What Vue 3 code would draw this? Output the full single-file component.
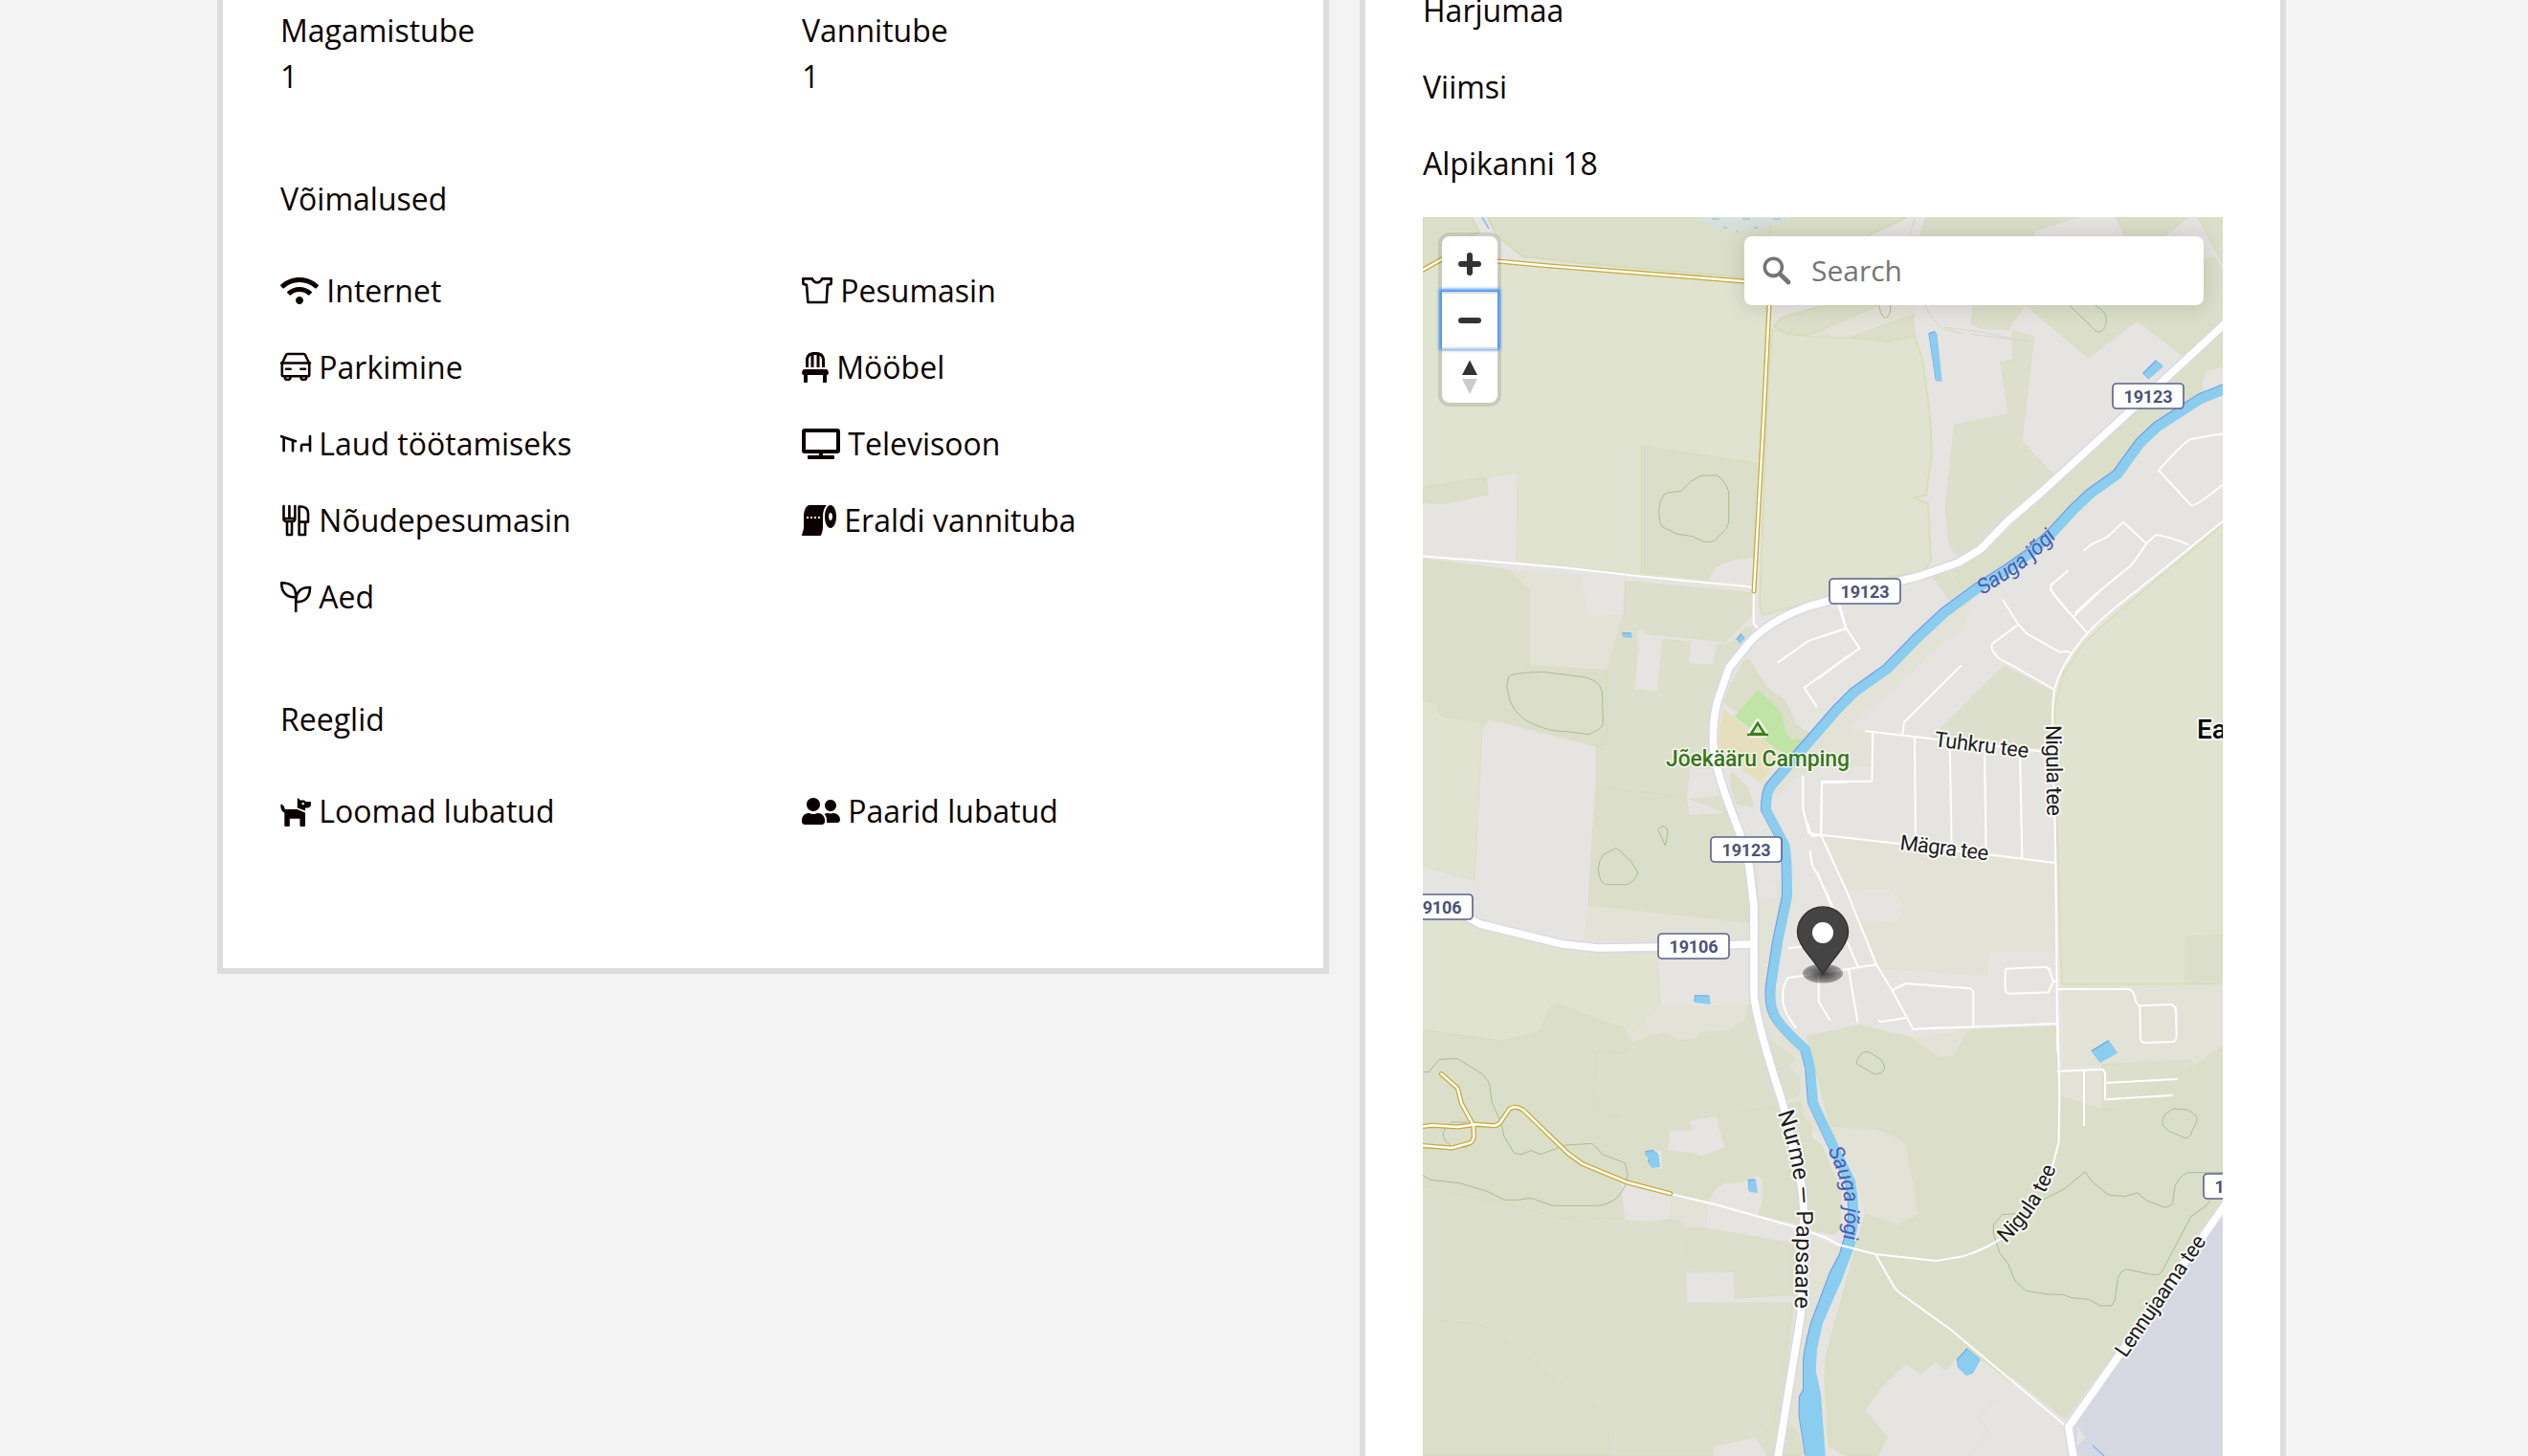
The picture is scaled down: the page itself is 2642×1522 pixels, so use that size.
<script setup>
const icons = {
  wifi: { w: 40, box: '0 0 640 512', fill: ['M634.91 154.88C457.74-8.99 182.19-8.93 5.09 154.88c-6.66 6.16-6.79 16.59-.35 22.98l34.24 33.97c6.14 6.1 16.02 6.23 22.4.38 145.92-133.68 371.3-133.71 517.25 0 6.38 5.85 16.26 5.71 22.4-.38l34.24-33.97c6.43-6.39 6.3-16.82-.36-22.98zM320 352c-35.35 0-64 28.65-64 64s28.65 64 64 64 64-28.65 64-64-28.65-64-64-64zm202.67-83.59c-115.26-101.93-290.21-101.82-405.34 0-6.9 6.1-7.12 16.69-.57 23.15l34.44 33.99c6 5.92 15.66 6.32 22.05.8 83.95-72.57 209.74-72.41 293.49 0 6.39 5.52 16.05 5.13 22.05-.8l34.44-33.99c6.56-6.46 6.33-17.06-.56-23.15z'] },
  car: { w: 32, box: '0 0 32 32', line: ['M2 11.5L6 3Q6.5 2 7.5 2H24.5Q25.5 2 26 3L30 11.5M1 11.5H31', 'M1.8 11.5V24.3Q1.8 25.3 2.8 25.3H29.2Q30.2 25.3 30.2 24.3V11.5', 'M4.8 25.3V27Q4.8 28.8 7.6 28.8T10.4 27V25.3M21.6 25.3V27Q21.6 28.8 24.4 28.8T27.2 27V25.3', 'M6 17.8H10.6M21.4 17.8H26'] },
  desk: { w: 32, box: '0 0 32 32', line: ['M1 8.2L16 13.2M3.6 9V23.2M13 12.4V23.2', 'M31 8V23.2M31 16.8H23.6Q22 16.8 22 18.4V23.2'] },
  cutlery: { w: 32, box: '0 0 32 32', line: ['M3.5 1V14.5Q3.5 17 6.5 17H12.5Q15.3 17 15.3 14.5V1M9.4 1V14M3.5 14H15.3', 'M7 17.3V31H12V17.3', 'M19.6 31V1.5C26 1 29 4 29 9V17.6H19.6M26 17.6V31H19.6'] },
  sprout: { w: 32, box: '0 0 32 32', line: ['M16.2 16.2C7 17.2 1.2 11.5 1.2 1.2C11 1.2 16.4 5 16.2 16.2V31', 'M16.2 21.2C16 11 21.5 5.6 31 6C31 16.5 26 21.3 16.2 21.2'] },
  shirt: { w: 32, box: '0 0 32 32', line: ['M1.2 3.4H10.8Q12.6 7.4 16 7.4T21.2 3.4H30.8L30.5 9L26.8 9.8L25.8 28H6.4L5 9.8L1.5 9Z'] },
  chair: { w: 28, box: '0 0 448 512', fill: ['M112 128c0-29.5 16.2-55 40-68.9V256h48V48h48v208h48V59.1c23.8 13.9 40 39.4 40 68.9v128h48V128C384 57.3 326.7 0 256 0h-64C121.3 0 64 57.3 64 128v128h48zm334.3 213.9l-10.7-32c-4.4-13.1-16.6-21.9-30.4-21.9H42.7c-13.8 0-26 8.8-30.4 21.9l-10.7 32C-5.2 362.6 10.2 384 32 384v112c0 8.8 7.2 16 16 16h32c8.8 0 16-7.2 16-16V384h256v112c0 8.8 7.2 16 16 16h32c8.8 0 16-7.2 16-16V384c21.8 0 37.2-21.4 30.3-42.1z'] },
  tv: { w: 40, box: '0 0 640 512', fill: ['M592 0H48A48 48 0 0 0 0 48v320a48 48 0 0 0 48 48h240v32H112a16 16 0 0 0-16 16v32a16 16 0 0 0 16 16h416a16 16 0 0 0 16-16v-32a16 16 0 0 0-16-16H352v-32h240a48 48 0 0 0 48-48V48a48 48 0 0 0-48-48zm-16 352H64V64h512v288z'] },
  paper: { w: 36, box: '0 0 576 512', fill: ['M128 0C74.98 0 32 85.96 32 192v172.07c0 41.12-9.8 62.77-31.17 126.87C-2.62 501.3 5.09 512 16.01 512h280.92c13.77 0 26-8.81 30.36-21.88 12.83-38.48 24.71-72.4 24.71-126.05V192c0-83.6 23.67-153.52 60.44-192H128zM80 192h32v32h-32zM144 192h32v32h-32zM208 192h32v32h-32zM272 192h32v32h-32zM480 0c-53.02 0-96 85.96-96 192s42.98 192 96 192 96-85.96 96-192S533.02 0 480 0zm0 256c-17.67 0-32-28.65-32-64s14.33-64 32-64 32 28.65 32 64-14.33 64-32 64z'] },
  dog: { w: 32, box: '0 0 32 32', fill: ['M.3 9.6Q.8 8.4 2 9Q4.6 10.8 4.8 14H17.6L26 17.6V31Q26 32 25 32H21.4Q20.4 32 20.4 31V23.8H9.8V31Q9.8 32 8.8 32H5.3Q4.3 32 4.3 31V17.8Q0 15.5 .3 9.6Z', 'M17.8 3Q17.8 1.6 19 2.6L20.8 4.4H25L26.6 6H31Q32 6 32 7V8.6Q32 12.4 28.6 12.4H26V15.6L17.8 12.4ZM22.6 7H24.8V9.2H22.6Z'] },
  people: { w: 40, box: '0 0 640 512', fill: ['M192 256c61.9 0 112-50.1 112-112S253.9 32 192 32 80 82.1 80 144s50.1 112 112 112zm76.8 32h-8.3c-20.8 10-43.9 16-68.5 16s-47.6-6-68.5-16h-8.3C51.6 288 0 339.6 0 403.2V432c0 26.5 21.5 48 48 48h288c26.5 0 48-21.5 48-48v-28.8c0-63.6-51.6-115.2-115.2-115.2zM480 256c53 0 96-43 96-96s-43-96-96-96-96 43-96 96 43 96 96 96zm48 32h-3.8c-13.9 4.8-28.6 8-44.2 8s-30.3-3.2-44.2-8H432c-20.4 0-39.2 5.9-55.7 15.4 24.4 26.3 39.7 61.2 39.7 99.8v38.4c0 2.2-.5 4.3-.6 6.4H592c26.5 0 48-21.5 48-48 0-61.9-50.1-112-112-112z'] },
}

const amenities = [
  ['wifi', 'Internet'], ['shirt', 'Pesumasin'],
  ['car', 'Parkimine'], ['chair', 'Mööbel'],
  ['desk', 'Laud töötamiseks'], ['tv', 'Televisoon'],
  ['cutlery', 'Nõudepesumasin'], ['paper', 'Eraldi vannituba'],
  ['sprout', 'Aed'],
]
const rules = [['dog', 'Loomad lubatud'], ['people', 'Paarid lubatud']]
const sections = [
  { title: 'Võimalused', items: amenities },
  { title: 'Reeglid', items: rules },
]
const address = ['Harjumaa', 'Viimsi', 'Alpikanni 18']

// Map geometry is kept in local tiles, three units to a pixel.
const tiles = {
  ne: 'translate(1900 220) scale(.33333)',
  w: 'translate(1480 420) scale(.33333)',
  e: 'translate(1900 620) scale(.33333)',
  sw: 'translate(1480 860) scale(.33333)',
  s: 'translate(1480 1100) scale(.33333)',
  se: 'translate(1900 1060) scale(.33333)',
  abs: 'translate(0 0)',
}
// [tile, kind, points]
const land = [
  ['abs', 'wood', '1487,227 1538,227 1546,243 1530,250 1507,268 1487,279'],
  ['abs', 'wood', '1555,227 1563,245 1591,268 1650,275 1823,290 1850,292 1860,227'],
  ['abs', 'wood', '1850,227 1993,227 1950,247 1850,300'],
  ['abs', 'marsh', '1775,227 1787,237 1815,242 1845,238 1873,227'],
  ['abs', 'field', '1852,345 1900,352 1937,353 1973,357 2001,351 2010,380 2017,433 2019,473 2013,518 1998,520 2015,526 2018,587 2010,597 1967,605 1883,632 1842,643 1839,633 1847,420'],
  ['abs', 'wood', '1854,341 1862,332 1907,319 1965,319 1890,351 1868,349'],
  ['abs', 'beige', '1890,351 1965,319 1998,319 2000,328 1937,353'],
  ['ne', 'wood', '105,397 300,325 303,392 220,410'],
  ['ne', 'wood', '338,21 930,21 960,80 320,80'],
  ['ne', 'grey', '680,80 680,65 820,21 935,21 960,80'],
  ['ne', 'wood', '935,21 1160,21 1090,80 960,80'],
  ['ne', 'wood', '1190,21 1269,21 1269,170'],
  ['ne', 'wood', '487,290 480,355 510,370 600,375 597,370 650,297'],
  ['ne', 'wood', '650,297 848,463 1000,345 1142,455 1269,345 1269,190 1243,143 1209,157 1209,290'],
  ['ne', 'meadow', '427,673 597,638 572,475 610,468 610,375 677,395 639,722 725,815 748,830 510,1070 440,1090 412,1050 400,940'],
  ['ne', 'wood', '1269,375 1269,555 1150,610 1040,690 940,815 780,935 640,1085 500,1180 450,1210 412,1120 520,1075 760,840'],
  ['ne', 'grey', '1269,490 1220,503 1203,540 1215,575 1269,550'],
  ['ne', 'meadow', '360,1150 410,1135 450,1215 420,1230'],
  ['abs', 'field', '2323,548 2213,640 2180,670 2157,703 2148,735 2147,753 2150,873 2155,1029 2323,1029'],
  ['w', 'field', '21,-405 75,-438 255,-435 600,-405 1100,-365 1085,0 1060,585 315,498 318,222 21,268'],
  ['w', 'wood', '21,268 220,237 225,290 85,320 21,317'],
  ['w', 'wood', '706,139 1067,192 1057,488 1000,495 940,517 917,557 706,535'],
  ['w', 'grey', '1057,488 1000,495 940,517 917,557 1057,590'],
  ['w', 'beige', '290,528 515,545 540,672 651,668 598,842 353,828 353,590'],
  ['w', 'meadow', '655,562 1058,600 1050,675 970,752 720,728 718,714 690,714 690,742 696,745 683,903 758,909 773,745 860,752 852,822 934,825 942,762 975,762 1040,705 1060,708 980,830 940,940 925,1000 925,1090 940,1165 1000,1300 848,1240 565,1207 565,1080 596,1075 598,842 651,668'],
  ['w', 'wood', '21,492 290,528 353,590 353,828 598,842 596,1075 565,1080 230,995 207,1023 195,1000 90,990 70,975 70,950 21,935'],
  ['w', 'wood', '565,1207 848,1240 854,1298 975,1292 1000,1320 1055,1450 1065,1600 1065,1635 540,1578 553,1350'],
  ['w', 'grey', '848,1243 860,1150 930,1150 958,1232 900,1242'],
  ['w', 'field', '21,935 70,950 70,975 90,990 195,1000 207,1023 183,1502 21,1455'],
  ['w', 'beige', '1200,1100 1340,960 1340,1120 1180,1180 1140,1240 1080,1195'],
  ['w', 'wood', '1028,812 1043,807 1100,897 1157,937 1192,1013 1240,1045 1150,1100 990,970 965,945 985,890'],
  ['w', 'grey', '962,944 1000,970 1010,980 998,990 962,964'],
  ['w', 'camp', '1072,903 1133,960 1148,985 1160,1040 1178,1060 1220,1060 1170,1110 1130,1090 998,987'],
  ['w', 'sand', '962,962 998,990 1080,1055 1150,1105 1080,1195 1010,1145 945,1080'],
  ['w', 'wood', '990,1160 1040,1210 1058,1268 1005,1262 985,1200'],
  ['e', 'beige', '0,470 30,420 490,0 460,95 380,170 95,428 165,435 163,545 60,545 -40,545 -60,520'],
  ['e', 'meadow', '583,228 735,308 733,490 355,455'],
  ['e', 'beige', '20,765 250,785 740,850 745,1125 535,1125 530,1200 195,1180'],
  ['e', 'grey', '95,935 165,928 225,930 270,980 255,1025 140,1037'],
  ['e', 'wood', '1152,1078 1269,1072 1269,1225 1152,1225'],
  ['e', 'beige', '765,1230 1269,1228 1269,1480 770,1480'],
  ['sw', 'field', '21,300 140,305 200,330 460,395 570,408 757,408 765,575 720,605 712,640 665,665 445,570 420,578 390,655 270,685 21,650'],
  ['sw', 'beige', '540,258 1042,315 1045,370 760,375 525,370'],
  ['sw', 'beige', '765,575 1043,570 1070,660 830,700 680,692 668,668 712,640 720,605'],
  ['s', 'wood', '21,-70 270,-35 390,-65 420,-142 445,-150 650,-75 680,-28 1030,-50 1070,-60 1145,165 1215,500 1210,800 1140,1266 21,1266'],
  ['sw', 'meadow', '565,718 648,724 680,692 735,668 780,660 830,685 877,685 890,658 975,655 1032,620 1043,570 1070,660 1145,885 940,918 855,937 650,937 637,917 568,908'],
  ['s', 'meadow', '21,418 540,538 560,520 825,527 845,550 910,553 1180,598 1180,780 1120,1170 1065,1208 932,1235 932,1266 610,1266 600,1150 585,1130 205,853 21,835'],
  ['s', 'beige', '803,450 915,470 908,553 845,550 825,527 793,522'],
  ['s', 'grey', '795,245 868,245 855,215 940,200 967,298 893,325 870,315 790,308'],
  ['s', 'grey', '642,410 803,450 793,522 730,530 655,525'],
  ['s', 'grey', '938,430 965,412 1020,408 1072,387 1085,400 1085,470 1070,510 1200,540 1180,598 908,553 915,470'],
  ['s', 'grey', '847,690 998,688 1000,770 1185,762 1180,782 850,785'],
  ['s', 'grey', '932,1235 1065,1208 1100,1266 932,1266'],
  ['s', 'grey', '720,305 770,310 772,365 735,362'],
  ['s', 'meadow', '845,550 910,553 1180,598 1180,762 1000,770 998,688 847,690'],
  ['sw', 'beige', '1060,100 1080,185 1150,175 1155,230 1100,500 1100,600 1200,710 1215,800 1230,880 1290,1000 1160,900 1060,560'],
  ['sw', 'meadow', '1100,675 1160,720 1190,740 1165,765 1203,800 1200,855 1150,870'],
  ['sw', 'grey', '1070,185 1130,180 1127,242 1075,238'],
  ['s', 'wood', '1150,165 1205,155 1215,200 1240,230 1240,270 1270,290 1330,430 1330,550 1310,572 1215,550'],
  ['s', 'beige', '1230,575 1340,620 1215,1000 1215,1080 1200,1195 1150,1266 1140,1230 1185,780'],
  ['s', 'wood', '1150,1180 1180,1175 1200,1195 1215,1266 1140,1266'],
  ['se', 'wood', '-35,70 130,35 295,75 380,135 420,132 475,50 740,40 755,50 755,255 890,298 930,300 1175,165 1269,100 1269,600 775,1270 605,1135 605,1160 500,1265 537,1307 470,1386 90,1386 33,1355 20,1150 25,1070 148,625 120,500 40,360'],
  ['se', 'beige', '295,75 380,135 420,132 475,50'],
  ['se', 'beige', '40,355 180,362 240,385 277,412 313,628 250,662 148,625 115,500'],
  ['se', 'beige', '770,0 1269,0 1269,100 1175,165 890,160 770,165'],
  ['se', 'meadow', '890,158 1170,145 1175,165 930,300 890,298'],
  ['se', 'beige', '755,180 890,180 890,298 755,255'],
  ['se', 'grey', '275,1098 325,1130 367,1092 400,1120 465,1050 610,1158 500,1265 537,1307 470,1386 190,1386 220,1325 147,1243 200,1170'],
  ['se', 'airfield', '1300,560 780,1310 795,1400 1300,1400'],
  ['se', 'grey', '812,1290 838,1330 812,1355'],
]
const contours = [
  ['w', 'M895 231H942L955 239L972 262L980 282V378L972 398L938 433L925 439H902L866 422L820 415L773 393L764 378L761 340L766 310L778 290L790 285L831 280L862 249Z'],
  ['w', 'M290 862Q300 850 398 847L525 863Q560 870 575 890L584 912L586 1010Q580 1030 540 1043L480 1035L425 1031Q370 1015 338 995L310 968L294 938L284 890Z'],
  ['sw', 'M625 80L640 88L655 105L673 120L695 155Q690 180 662 194H595Q575 190 571 145Q572 120 587 100Z'],
  ['sw', 'M758 22Q770 3 787 18L788 40L781 71Z'],
  ['s', 'M0 62H40L70 25Q75 21 130 20L210 70Q230 90 232 110L237 155L268 225L275 262L308 317L330 320L360 308L390 320L470 291L552 286L585 320L655 347L663 385L655 420L632 455Q600 480 565 481H428L360 457L320 463H277L220 435L135 410L45 400L15 382'],
  ['s', 'M160 219H110L90 240L84 255L90 275L110 295L160 298'],
  ['ne', 'M190 297L197 320Q212 355 226 320L227 297'],
  ['ne', 'M788 297L870 377Q890 390 902 360Q910 330 890 312L868 297'],
  ['se', 'M135 125Q148 113 165 122L198 143L209 165Q208 185 188 187H175L122 157Q118 148 135 125Z'],
  ['se', 'M1085 320Q1090 310 1115 297L1160 300Q1195 320 1187 338L1167 380Q1160 393 1148 388L1120 375L1100 368L1082 350Q1077 340 1085 320Z'],
  ['se', 'M1269 497H1165Q1145 495 1120 537L1111 595Q1095 610 1080 604L1030 585L1002 561L960 572L910 567L860 526L837 495L775 547L700 585L640 625L578 629L550 660V690L570 750L597 785L618 837L652 868L720 879L770 880L795 890L850 895L885 915H920Q935 900 933 880L940 830Q950 800 970 801L1045 817Q1070 820 1077 810L1170 634L1215 603L1240 570'],
]
const lanes = [
  ['w', 'M0 483L230 500L460 520L700 547L1045 580L1058 590M1058 590V695L1085 725'],
  ['w', 'M1325 640L1347 712L1232 749L1135 817M1350 800L1217 897L1255 955M1213 1175V1275L1230 1350M1350 1193H1272L1270 1350'],
  ['s', 'M795 443L940 478L1180 545L1285 580L1325 604L1350 610'],
  ['se', 'M-20 685L30 705L60 722L180 753L370 774L455 760Q530 735 580 700M735 480L755 400L757 250L751 0M180 753L240 858Q250 872 270 885L410 985L775 1290'],
  ['se', 'M751 180L892 173L900 185V268L1110 255M900 216L1125 204M834 178V348M1009 -26L1011 75Q1013 90 1025 90L1115 87L1124 75L1122 -20'],
  ['e', 'M150 433L370 458L735 500M172 435L169 590H12L9 758M265 443L270 405L448 228M303 450L306 785M413 460L419 800M522 480L527 820M633 490L640 833M-30 752L9 758L250 785L740 845M9 758L90 935L183 1165L232 1245L298 1367L750 1350M738 500L735 380Q738 310 742 300Q760 230 820 155Q870 90 990 0L1269 -225M738 500L745 845L751 1440'],
  ['e', 'M580 22L628 98L545 160Q540 175 560 197Q565 205 600 222L742 303M628 98L655 127L757 185L780 182L792 188M735 0L800 75L842 122M800 75L878 0M68 40L88 110L0 140M88 110L130 173L0 268M0 880L45 990M90 1090L125 1172M-30 1190L75 1182L183 1165M96 1180L124 1343M232 1245L275 1224L478 1240L487 1250V1360M190 1340L200 1344L275 1332M590 1178L712 1172Q728 1175 728 1190L738 1218L722 1252L605 1256Q588 1255 587 1245V1188ZM738 1218H751M751 1242H978L988 1252L1000 1288L1009 1294L1110 1290L1120 1300V1310'],
  ['ne', 'M1269 700L1170 717Q1150 722 1068 815L1170 925Q1178 933 1269 860M835 1066L857 1047L907 1024L957 977L1030 1045M1160 1048Q1120 1028 1060 1017L1030 1045L985 1110L872 1202L808 1260M785 1260L730 1190V1175L783 1130'],
  ['sw', 'M1227 0L1240 43L1270 37M1235 90L1242 135L1257 160L1310 270M1170 393L1230 388M1350 460L1165 487Q1150 515 1150 530V560Q1155 600 1190 642M1262 470V560L1297 618'],
]
const trails = [
  ['abs', 'M1480 286L1507 271L1520 265L1565 273L1620 278L1823 294L1853 296M1853 296L1849 319L1843 440L1833 618'],
  ['s', 'M0 235L50 229L130 234L187 226L245 230Q258 228 265 218L292 178Q310 165 335 180L475 316L520 349L665 409L797 443M79 68L130 112L142 160L180 230L181 265Q178 280 170 284L112 300L0 291'],
]
const highways = [
  'M2330 334L2240 417L2133 515L2098 545L2070 574L2047 588L2007 602L1967 612L1890 634Q1850 648 1828 672L1807 698L1795 733Q1789 755 1791 785Q1794 810 1818 870L1828 905L1833 947V1040Q1836 1070 1863 1153L1880 1225Q1885 1250 1885 1267V1320L1882 1375L1857 1530',
  'M1480 944L1530 957L1547 966L1633 987L1670 991L1733 990L1832 987',
  'M2330 1253L2161.700 1491.700L2168 1530',
]
const river = 'M2330 405L2300 417L2255 446L2237 463L2213 496L2185 516L2168 532L2145 557L2120 580L2100 594L2067 615L2033 640L2003 668L1973 699L1938 724L1920 742L1873 796L1850 823Q1846 830 1846 847L1865 883Q1868 890 1868 937L1858 985L1851 1030Q1849 1050 1855 1062Q1862 1075 1887 1097L1892 1117L1895 1153L1917 1200L1934 1235Q1939 1260 1936 1285L1928 1312'
const riverMouth = 'M1930 1298L1913 1330L1893 1383Q1886 1410 1885 1423V1453L1881 1460L1880.500 1480L1887 1522H1907.700L1903 1457L1897.700 1433L1899 1410L1905 1383L1924 1340L1940 1298Z'
const ponds = [
  ['w', '648,727 676,727 677,741 650,739'], ['w', '1006,748 1020,730 1032,741 1016,758'],
  ['ne', '348,388 367,381 374,390 389,537 370,535'], ['ne', '1019,513 1061,472 1083,490 1036,530'],
  ['sw', '875,544 920,544 923,570 873,564'],
  ['s', '721,312 745,309 760,322 765,360 740,363 728,345 732,335 721,325'],
  ['s', '1042,402 1065,400 1071,441 1045,438'],
  ['se', '858,118 912,85 939,122 885,153'], ['se', '437,1085 469,1050 510,1085 485,1128 465,1134 440,1110'],
]
const shields = [
  ['19123', 2245, 414], ['19123', 1949, 618], ['19123', 1825, 888],
  ['19106', 1770, 989], ['19106', 1502, 948], ['19106', 2340, 1240],
]
const labels = [
  { id: 'p1', text: 'Nurme — Papsaare', len: 207, size: 24, cls: 'road', d: 'M1857.500 1163Q1870 1200 1874.500 1231Q1878 1255 1877.500 1290L1875.500 1375' },
  { id: 'p2', text: 'Nigula tee', len: 95, size: 23, cls: 'street', d: 'M2138 758L2139.500 860' },
  { id: 'p3', text: 'Tuhkru tee', len: 99, size: 22, cls: 'street', d: 'M2021 780L2125 793' },
  { id: 'p4', text: 'Mägra tee', len: 93, size: 22, cls: 'street', d: 'M1985 888L2083 900' },
  { id: 'p5', text: 'Nigula tee', len: 96, size: 22, cls: 'street', d: 'M2096 1300Q2140 1259 2155 1200' },
  { id: 'p6', text: 'Lennujaama tee', len: 149, size: 22, cls: 'street', d: 'M2221.500 1420L2310 1292' },
  { id: 'p7', text: 'Sauga jõgi', len: 99, size: 22, cls: 'water', d: 'M2072 622L2100 604Q2125 589 2156 554' },
  { id: 'p8', text: 'Sauga jõgi', len: 97, size: 22, cls: 'water', d: 'M1910 1202Q1928 1239 1928 1264L1926 1310' },
]
</script>

<template>
  <div class="page">
    <section class="card details">
      <div class="row">
        <div class="col">Magamistube<br>1</div>
        <div class="col">Vannitube<br>1</div>
      </div>
      <div v-for="s in sections" :key="s.title" class="section">
        <div class="title">{{ s.title }}</div>
        <div class="row list">
          <div v-for="[icon, name] in s.items" :key="name" class="col item">
            <svg :width="icons[icon].w" height="32" :viewBox="icons[icon].box">
              <path v-for="d in icons[icon].fill" :key="d" :d="d" class="solid" />
              <path v-for="d in icons[icon].line" :key="d" :d="d" class="outline" />
            </svg> {{ name }}
          </div>
        </div>
      </div>
    </section>

    <section class="card place">
      <p v-for="a in address" :key="a">{{ a }}</p>
      <div class="map">
        <svg class="canvas" width="836" height="1295" viewBox="1487 227 836 1295">
          <defs>
            <radialGradient id="shade">
              <stop offset="0" stop-color="#000" stop-opacity=".75" />
              <stop offset="1" stop-color="#000" stop-opacity=".32" />
            </radialGradient>
            <path v-for="l in labels" :id="l.id" :key="l.id" :d="l.d" />
          </defs>
          <polygon v-for="([t, k, p], i) in land" :key="'l' + i" :points="p" :transform="tiles[t]" :class="['land', k]" />
          <path v-for="([t, d], i) in contours" :key="'c' + i" :d="d" :transform="tiles[t]" class="contour" />
          <path d="M1549 227L1556 239M2187 1511L2199 1522" class="brook" />
          <path d="M1789 229H1797M1821 229H1829M1853 229H1861M1801 238H1805M1833 238H1837M1815 241V243" class="reeds" />
          <path d="M335 297Q355 340 392 372L455 386M395 367L510 380L610 402M478 388L660 410M305 21L285 80" :transform="tiles.ne" class="track" />
          <path :d="river" class="river-edge" />
          <path :d="riverMouth" class="mouth-edge" />
          <path :d="river" class="river" />
          <path :d="riverMouth" class="mouth" />
          <g v-for="([t, p], i) in ponds" :key="'p' + i" :transform="tiles[t]">
            <polygon :points="p" class="pond-edge" /><polygon :points="p" class="pond" />
          </g>
          <path v-for="([t, d], i) in lanes" :key="'n' + i" :d="d" :transform="tiles[t]" class="lane" />
          <path v-for="(d, i) in highways" :key="'hc' + i" :d="d" class="casing" />
          <path v-for="(d, i) in highways" :key="'h' + i" :d="d" class="highway" />
          <g v-for="([t, d], i) in trails" :key="'t' + i" :transform="tiles[t]">
            <path :d="d" class="trail-edge" /><path :d="d" class="trail" />
          </g>

          <g v-for="([n, x, y], i) in shields" :key="'s' + i">
            <rect :x="x - 37" :y="y - 13" width="74" height="26" rx="4" class="shield" />
            <text :x="x" :y="y + 6.500" textLength="51" class="number">{{ n }}</text>
          </g>
          <text v-for="l in labels" :key="'x' + l.id" :class="l.cls" :font-size="l.size">
            <textPath :href="'#' + l.id" :textLength="l.len" lengthAdjust="spacing">{{ l.text }}</textPath>
          </text>
          <path d="M1837 754.500L1829 767H1845ZM1827 768H1847" class="tent halo" />
          <path d="M1837 756L1830 767H1844ZM1826 768H1848" class="tent" />
          <text x="1741" y="800.700" textLength="192" class="camp-name">Jõekääru Camping</text>
          <text x="2296" y="771.700" class="town">East</text>

          <ellipse cx="1905" cy="1017.600" rx="21" ry="10" fill="url(#shade)" />
          <path d="M1905 1018Q1901 1012 1890 998Q1878.500 984 1878.500 974.500A26.500 26.500 0 0 1 1931.500 974.500Q1931.500 984 1920 998Q1909 1012 1905 1018Z" class="pin" />
          <circle cx="1905" cy="975" r="11" fill="#fff" />
        </svg>

        <div class="controls">
          <button><svg width="58" height="58" viewBox="0 0 58 58"><path d="M20 29H38M29 20V38" /></svg></button>
          <button class="focused"><svg width="58" height="56" viewBox="0 0 58 56"><path d="M20 28H38" /></svg></button>
          <button><svg width="58" height="56" viewBox="0 0 58 56"><polygon points="29,11.500 37,27 21,27" fill="#333" /><polygon points="21,31 37,31 29,47" fill="#ccc" /></svg></button>
        </div>
        <div class="search">
          <svg width="40" height="40" viewBox="0 0 18 18"><path d="M7.400 2.500c-2.700 0-4.900 2.200-4.900 4.900s2.200 4.900 4.900 4.900c1 0 1.800-.2 2.500-.8l3.700 3.700c.2.2.4.3.8.3.7 0 1.100-.4 1.100-1.100 0-.3-.1-.5-.3-.8L11.400 10c.4-.8.8-1.600.8-2.500.1-2.800-2.100-5-4.800-5zm0 1.600c1.800 0 3.200 1.400 3.200 3.200s-1.400 3.200-3.200 3.200-3.300-1.300-3.300-3.100 1.400-3.300 3.300-3.300z" /></svg>
          <span>Search</span>
        </div>
      </div>
    </section>
  </div>
</template>

<style>
body { background: #f3f3f3; }
</style>

<style scoped>
.page {
  box-sizing: border-box;
  height: 1522px;
  overflow: hidden;
  padding-left: 227px;
  display: flex;
  align-items: flex-start;
  gap: 32px;
  font: 32px/48px "Open Sans", sans-serif;
  color: #0d0000;
}
.card {
  box-sizing: border-box;
  background: #fff;
  border: 6px solid #ddd;
  border-top: 0;
  padding: 0 60px;
}
.details { width: 1162px; height: 1018px; padding-top: 8px; }
.row { display: flex; flex-wrap: wrap; margin: 0 -30px; }
.col { box-sizing: border-box; width: 50%; padding: 0 30px; }
.section { margin-top: 80px; }
.title { margin-bottom: 48px; }
.list { row-gap: 32px; }
.item { white-space: nowrap; }
.item svg { vertical-align: -4px; overflow: visible; }
.solid { fill: #0d0000; fill-rule: evenodd; }
.outline { fill: none; stroke: #0d0000; stroke-width: 2.600; stroke-linecap: round; stroke-linejoin: round; }

.place { width: 968px; height: 1600px; margin-top: -13px; }
.place p { margin: 0 0 32px; }
.map { position: relative; width: 836px; height: 1295px; background: #e5e4e0; overflow: hidden; }
.canvas { display: block; }

.land { stroke-width: 2; stroke: none; }
.wood { fill: #dbdfc9; stroke: #d6dcb6; }
.field { fill: #dfe3cf; stroke: #d8dfba; }
.meadow { fill: #dddfcd; stroke: #d7dcbb; }
.beige { fill: #e2e2d6; }
.grey { fill: #e5e4e0; }
.marsh { fill: #d7dfdb; }
.camp { fill: #c0e4a6; }
.sand { fill: #e5dfbd; }
.airfield { fill: #d5d8e1; }
.contour { fill: none; stroke: #a9bc97; stroke-width: 3; stroke-linejoin: round; }
.brook { fill: none; stroke: #8ab8ee; stroke-width: 1.500; }
.reeds { fill: none; stroke: #9ccbdc; stroke-width: 1.500; }
.track { fill: none; stroke: #d4d6c8; stroke-width: 3; }
.river, .river-edge { fill: none; stroke: #8acdee; stroke-width: 10; stroke-linejoin: round; }
.river-edge { stroke: #739eea; transform: translate(-1px, -.8px); }
.mouth, .pond { fill: #8acdee; }
.mouth-edge { fill: #739eea; transform: translate(-1px, -.5px); }
.pond-edge { fill: #739eea; transform: translate(-2px, -3px); }
.lane { fill: none; stroke: #fff; stroke-width: 6; stroke-linecap: round; stroke-linejoin: round; }
.casing { fill: none; stroke: #d8d8e6; stroke-width: 10.500; stroke-linejoin: round; }
.highway { fill: none; stroke: #fff; stroke-width: 7.600; stroke-linejoin: round; }
.trail-edge, .trail { fill: none; stroke: #c8ab38; stroke-width: 5; stroke-linejoin: round; stroke-linecap: round; }
.trail { stroke: #fff; stroke-width: 2.400; }
g[transform*="scale"] .trail-edge { stroke-width: 15.500; }
g[transform*="scale"] .trail { stroke-width: 7.500; }
.shield { fill: #fff; stroke: #5b6089; stroke-width: 1.600; }
.number { font: 700 18px "Roboto", sans-serif; fill: #4d5278; text-anchor: middle; }
.road, .street, .water, .camp-name, .town { font-family: "Roboto", sans-serif; paint-order: stroke; stroke-linejoin: round; }
.road, .street { fill: #1c1c1c; stroke: rgba(255, 255, 255, .8); stroke-width: 4px; }
.water { fill: #4a5cb0; font-style: italic; }
.camp-name { font-size: 23px; font-weight: 500; fill: #39761a; stroke: rgba(255, 255, 255, .75); stroke-width: 3px; }
.town { font-size: 28px; font-weight: 500; fill: #000; stroke: rgba(255, 255, 255, .8); stroke-width: 4px; }
.tent { fill: none; stroke: #3f7d1c; stroke-width: 2.600; }
.tent.halo { stroke: rgba(255, 255, 255, .8); stroke-width: 6; stroke-linejoin: round; }
.pin { fill: #444; stroke: #333; stroke-width: 1.500; }

.controls {
  position: absolute;
  left: 20px;
  top: 20px;
  width: 58px;
  border-radius: 8px;
  background: #fff;
  box-shadow: 0 0 0 4px rgba(0, 0, 0, .1);
}
.controls button { box-sizing: border-box; display: block; width: 58px; height: 58px; border: 0; padding: 0; background: none; }
.controls button + button { border-top: 2px solid #ddd; }
.controls svg { display: block; fill: none; stroke: #333; stroke-width: 6; stroke-linecap: round; }
.controls polygon { stroke: none; }
.controls .focused { position: relative; box-shadow: 0 0 3px 3px #4a96f5; }
.controls .focused + button { position: relative; }
.search {
  position: absolute;
  box-sizing: border-box;
  right: 20px;
  top: 20px;
  width: 480px;
  height: 72px;
  padding-left: 14px;
  border-radius: 8px;
  background: #fff;
  box-shadow: 0 0 20px 4px rgba(0, 0, 0, .1);
  display: flex;
  align-items: center;
  gap: 16px;
  font-size: 30px;
  color: #757575;
}
.search svg { fill: #757575; }
</style>
